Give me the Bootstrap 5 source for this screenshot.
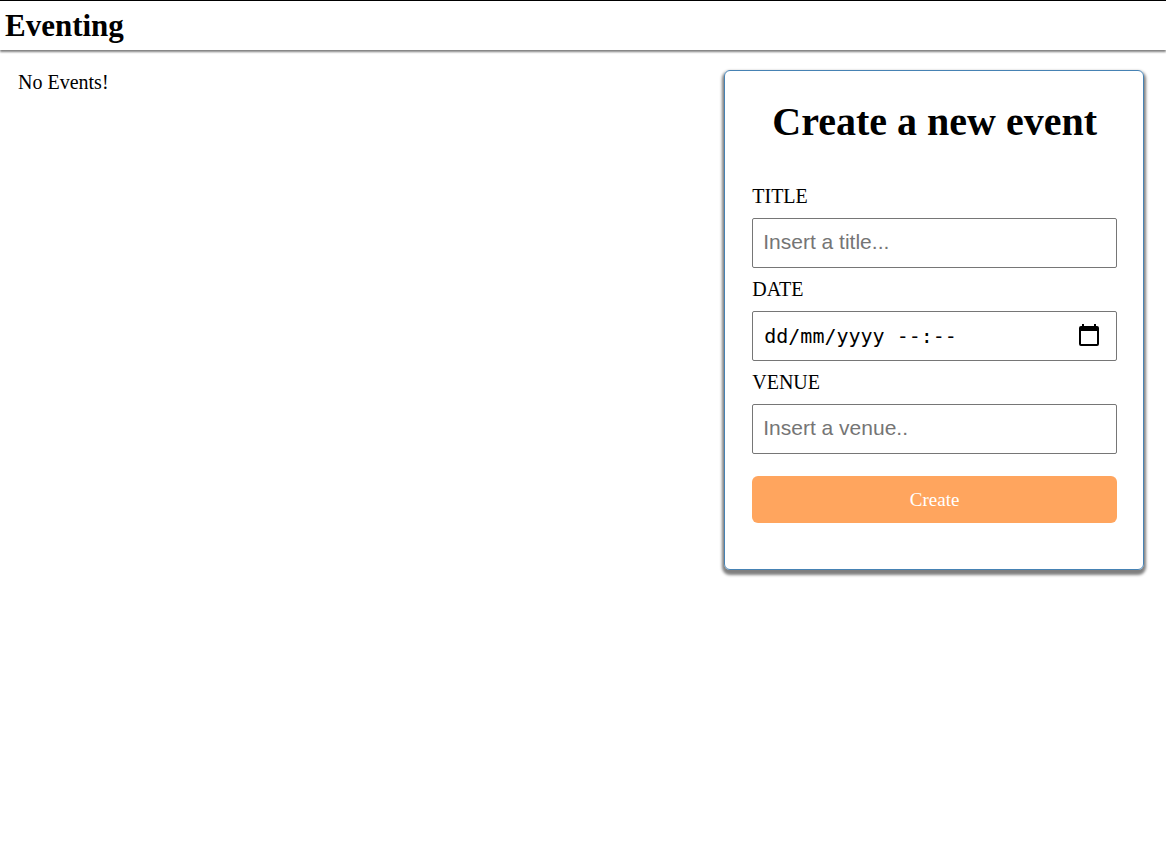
<!DOCTYPE html>
<html lang="en">
<head>
<meta charset="utf-8">
<meta name="viewport" content="width=device-width, initial-scale=1">
<title>Eventing</title>
<link rel="stylesheet" href="https://cdn.jsdelivr.net/npm/bootstrap@5.3.0/dist/css/bootstrap.min.css">
<style>
  body { font-family: "Liberation Serif", "Times New Roman", serif; font-size: 20px; line-height: 24px; color: #000; background: #fff; }
  .site-header { border-top: 1px solid #000; padding: 5px; box-shadow: 0 2px 2px gray; }
  .site-header h1 { font-size: 31px; line-height: 39px; font-weight: 700; }
  .page { padding: 20px 22px 20px 18px; }
  .event-form { width: 36vw; min-width: 320px; padding: 26px 26px 46px 27px; border: 1px solid steelblue; border-radius: 6px; box-shadow: 0 3px 3px 2px gray; }
  .event-form h2 { font-size: 40px; line-height: 50px; font-weight: 700; margin-bottom: 38px; }
  .event-form label { line-height: 22px; margin-bottom: 11px; }
  .event-form .form-control { height: 50px; padding: 0 10px 2px; border: 1px solid #767676; border-radius: 2px; color: #000; font: 21px "Liberation Sans", Arial, sans-serif; }
  .event-form .form-control::placeholder { color: #757575; opacity: 1; }
  .event-form .date-field { padding: 0 11px; font: 20px "DejaVu Sans Mono", monospace; }
  .event-form .date-field::placeholder { color: #000; }
  .field { margin-bottom: 10px; }
  .picker { right: 17px; top: 12px; }
  .create-btn { height: 47px; margin-top: 22px; padding: 8px 12px 6px; border: 0; border-radius: 6px; background: #ffa55e; color: #fff; font-size: 19px; }
  .create-btn:hover { background: #f5964b; color: #fff; }
</style>
</head>
<body class="min-vh-100">
<header class="site-header">
  <h1 class="mb-0">Eventing</h1>
</header>
<main class="page d-flex justify-content-between align-items-start">
  <p class="mb-0">No Events!</p>
  <form class="event-form">
    <h2 class="text-center">Create a new event</h2>
    <div class="field">
      <label class="d-block" for="title">TITLE</label>
      <input class="form-control" id="title" type="text" placeholder="Insert a title...">
    </div>
    <div class="field">
      <label class="d-block" for="date">DATE</label>
      <div class="position-relative">
        <input class="form-control date-field" id="date" type="text" placeholder="dd/mm/yyyy --:--">
        <button class="picker position-absolute d-flex border-0 bg-transparent p-0" type="button" aria-label="Choose date">
          <svg width="22" height="24" viewBox="0 0 22 24" aria-hidden="true"><path fill="#000" fill-rule="evenodd" d="M4 1h2v2h10V1h2v2h1q2 0 2 2v16q0 2-2 2H3q-2 0-2-2V5q0-2 2-2h1zM3 8v13h16V8z"/></svg>
        </button>
      </div>
    </div>
    <div>
      <label class="d-block" for="venue">VENUE</label>
      <input class="form-control" id="venue" type="text" placeholder="Insert a venue..">
    </div>
    <button class="btn create-btn w-100" type="submit">Create</button>
  </form>
</main>
<script src="https://cdn.jsdelivr.net/npm/bootstrap@5.3.0/dist/js/bootstrap.bundle.min.js"></script>
</body>
</html>
